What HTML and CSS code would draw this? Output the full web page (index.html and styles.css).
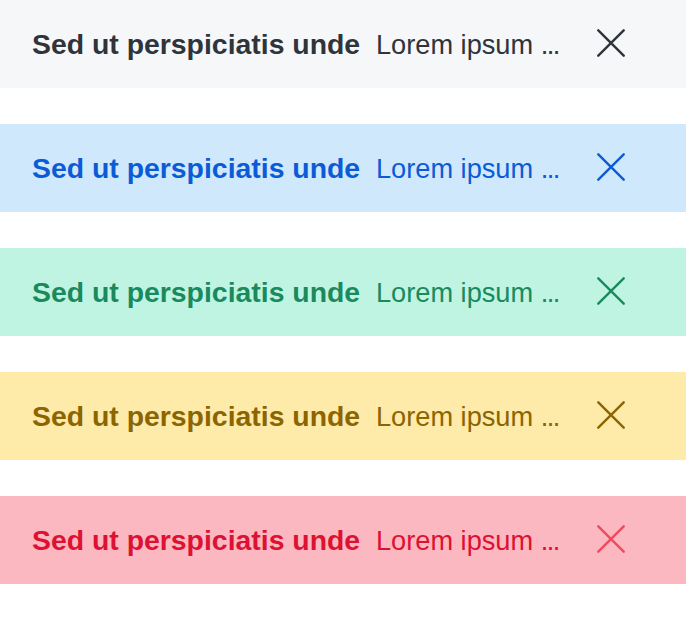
FILE: index.html
```html
<!DOCTYPE html>
<html>
<head>
<meta charset="utf-8">
<link rel="stylesheet" href="styles.css">
</head>
<body>
<div class="stack">
  <div class="banner gray">
    <span class="title">Sed ut perspiciatis unde</span>
    <span class="msg">Lorem ipsum <span class="dots">...</span></span>
    <button class="close" aria-label="Close"><svg viewBox="0 0 28 28" width="28" height="28"><path d="M1.3 1.3L26.7 26.7M26.7 1.3L1.3 26.7" stroke="currentColor" stroke-width="2.4" stroke-linecap="round"/></svg></button>
  </div>
  <div class="banner blue">
    <span class="title">Sed ut perspiciatis unde</span>
    <span class="msg">Lorem ipsum <span class="dots">...</span></span>
    <button class="close" aria-label="Close"><svg viewBox="0 0 28 28" width="28" height="28"><path d="M1.3 1.3L26.7 26.7M26.7 1.3L1.3 26.7" stroke="currentColor" stroke-width="2.4" stroke-linecap="round"/></svg></button>
  </div>
  <div class="banner green">
    <span class="title">Sed ut perspiciatis unde</span>
    <span class="msg">Lorem ipsum <span class="dots">...</span></span>
    <button class="close" aria-label="Close"><svg viewBox="0 0 28 28" width="28" height="28"><path d="M1.3 1.3L26.7 26.7M26.7 1.3L1.3 26.7" stroke="currentColor" stroke-width="2.4" stroke-linecap="round"/></svg></button>
  </div>
  <div class="banner yellow">
    <span class="title">Sed ut perspiciatis unde</span>
    <span class="msg">Lorem ipsum <span class="dots">...</span></span>
    <button class="close" aria-label="Close"><svg viewBox="0 0 28 28" width="28" height="28"><path d="M1.3 1.3L26.7 26.7M26.7 1.3L1.3 26.7" stroke="currentColor" stroke-width="2.4" stroke-linecap="round"/></svg></button>
  </div>
  <div class="banner red">
    <span class="title">Sed ut perspiciatis unde</span>
    <span class="msg">Lorem ipsum <span class="dots">...</span></span>
    <button class="close" aria-label="Close"><svg viewBox="0 0 28 28" width="28" height="28"><path d="M1.3 1.3L26.7 26.7M26.7 1.3L1.3 26.7" stroke="currentColor" stroke-width="2.4" stroke-linecap="round"/></svg></button>
  </div>
</div>
</body>
</html>
```
FILE: styles.css
```css
html, body {
  margin: 0;
  padding: 0;
  background: #ffffff;
}
body {
  font-family: "Liberation Sans", Arial, sans-serif;
}
.stack {
  display: flex;
  flex-direction: column;
  gap: 36px;
}
.banner {
  height: 88px;
  display: flex;
  align-items: center;
  padding: 0 0 0 32px;
  box-sizing: border-box;
}
.title {
  font-size: 28.4px;
  font-weight: bold;
  white-space: nowrap;
  width: 328px;
  flex: none;
  margin-top: 1px;
}
.msg {
  font-size: 27.2px;
  margin-left: 16px;
  width: 201px;
  flex: none;
  white-space: nowrap;
  margin-top: 1px;
}
.dots {
  letter-spacing: -1.5px;
}
.close {
  margin: 0 0 2px 20px;
  background: none;
  border: 0;
  padding: 0;
  width: 28px;
  height: 28px;
  flex: none;
  display: flex;
  color: inherit;
  cursor: pointer;
}
.close svg { display: block; }
.gray { background: #f6f7f9; color: #2f343b; }
.blue { background: #d0e8fc; color: #0c5bd6; }
.green { background: #c0f4e2; color: #1a8a5e; }
.yellow { background: #feeaa9; color: #8b6500; }
.red { background: #fbb8c0; color: #dd1133; }
.red .close { color: #ef4a5f; }
```
